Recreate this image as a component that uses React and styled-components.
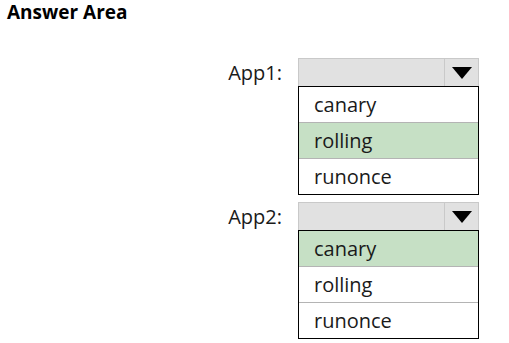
import React from 'react';
import styled, { createGlobalStyle } from 'styled-components';

const apps = [
  { name: 'App1:', options: ['canary', 'rolling', 'runonce'], picked: 'rolling' },
  { name: 'App2:', options: ['canary', 'rolling', 'runonce'], picked: 'canary' },
];

const GlobalStyle = createGlobalStyle`
  html, body {
    margin: 0;
    background: #ffffff;
  }
  body {
    font-family: "Open Sans", "Noto Sans", sans-serif;
    color: #1a1a1a;
  }
`;

const Page = styled.div`
  width: 509px;
  height: 343px;
  padding: 0 0 0 7px;
  box-sizing: border-box;
`;

const Title = styled.h1`
  margin: 0;
  font-size: 19px;
  line-height: 24px;
  font-weight: 700;
  color: #000;
`;

const Form = styled.div`
  display: flex;
  flex-direction: column;
  gap: 7px;
  margin-top: 34px;
`;

const Row = styled.div`
  display: grid;
  grid-template-columns: 291px 181px;
  align-items: start;
`;

const Label = styled.div`
  height: 28px;
  display: flex;
  align-items: center;
  justify-content: flex-end;
  padding-right: 16px;
  font-size: 20px;
`;

const Control = styled.div`
  display: flex;
  flex-direction: column;
`;

const Select = styled.div`
  height: 28px;
  box-sizing: border-box;
  display: flex;
  background: #e1e1e1;
  border: 1px solid #c9c9c9;
  border-bottom: none;
`;

const SelectValue = styled.div`
  flex: 1;
`;

const ArrowButton = styled.div`
  width: 33px;
  border-left: 1px solid #c9c9c9;
  display: flex;
  align-items: center;
  justify-content: center;
`;

const List = styled.div`
  border: 1px solid #000;
  display: flex;
  flex-direction: column;
`;

const Item = styled.div`
  height: 35px;
  display: flex;
  align-items: center;
  padding-left: 15px;
  font-size: 20px;
  background: ${p => (p.$picked ? '#c6e0c5' : '#ffffff')};
  & + & {
    border-top: 1px solid #b4b4b4;
  }
`;

const Arrow = () => (
  <svg width="20" height="12" viewBox="0 0 20 12">
    <polygon points="0,0 20,0 10,12" fill="#000" />
  </svg>
);

export default function App() {
  return (
    <>
      <GlobalStyle />
      <Page>
        <Title>Answer Area</Title>
        <Form>
          {apps.map(app => (
            <Row key={app.name}>
              <Label>{app.name}</Label>
              <Control>
                <Select>
                  <SelectValue />
                  <ArrowButton>
                    <Arrow />
                  </ArrowButton>
                </Select>
                <List>
                  {app.options.map(opt => (
                    <Item key={opt} $picked={opt === app.picked}>
                      {opt}
                    </Item>
                  ))}
                </List>
              </Control>
            </Row>
          ))}
        </Form>
      </Page>
    </>
  );
}
